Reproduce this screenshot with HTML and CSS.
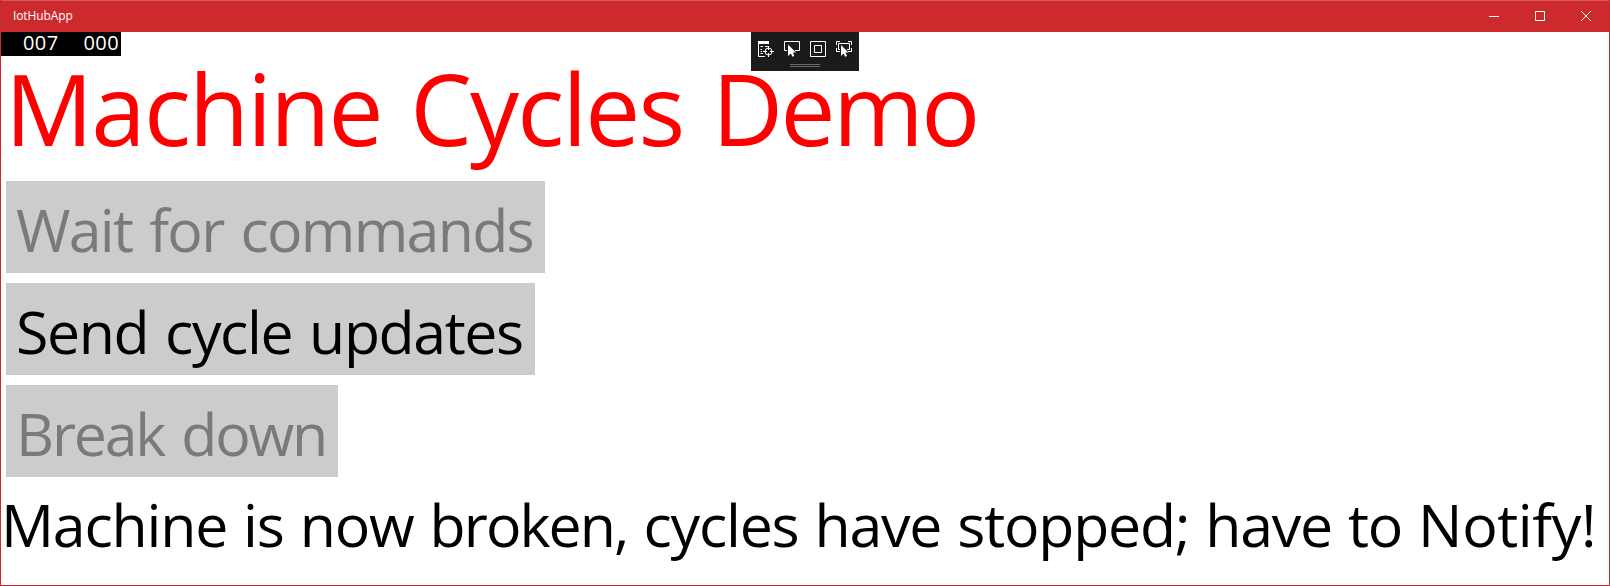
FILE: index.html
```html
<!DOCTYPE html>
<html lang="en">
<head>
<meta charset="utf-8">
<title>IotHubApp</title>
<link rel="stylesheet" href="styles.css">
</head>
<body>
<div class="window">
  <header class="titlebar">
    <span class="app-name">IotHubApp</span>
    <div class="controls">
      <svg width="10" height="10" viewBox="0 0 10 10"><path d="M0 5.5H10"/></svg>
      <svg width="10" height="10" viewBox="0 0 10 10"><path d="M.5 .5H9.5V9.5H.5Z"/></svg>
      <svg width="10" height="10" viewBox="0 0 10 10"><path d="M0 0L10 10M10 0L0 10"/></svg>
    </div>
  </header>
  <main class="content">
    <div class="counters"><span>007</span><span>000</span></div>
    <div class="debug-bar">
      <div class="tools">
        <svg width="17" height="17" viewBox="0 0 17 17"><path class="solid" d="M0 0H11V3H0Z"/><path d="M.5 0V15.5H7M2.5 5.5H5M2.5 8.5H4M2.5 10.5H4M2.5 12.5H5"/><path d="M7 5.5H10"/><circle cx="10.5" cy="10.5" r="3.5"/><path d="M10.5 5V9M10.5 12V16M5 10.5H9M12 10.5H16"/></svg>
        <svg width="17" height="17" viewBox="0 0 17 17"><path d="M3 9.5H.5V.5H15.5V9.5H11"/><path class="solid" d="M4 3.5V15L6.8 12.5L8.5 15.8L10.3 15L8.9 11.6H12Z"/></svg>
        <svg width="17" height="17" viewBox="0 0 17 17"><path d="M.5 .5H15.5V15.5H.5ZM4.5 4.5H11.5V11.5H4.5Z"/></svg>
        <svg width="17" height="17" viewBox="0 0 17 17"><path d="M.5 4V.5H4M12 .5H15.5V4M15.5 7V10.5H12M.5 7V10.5H4M4 8.5H2.5V2.5H13.5V8.5H11"/><path class="solid" d="M5 4V15L7.5 12.5L9.2 15.8L11 15L9.5 11.6H12.5Z"/></svg>
      </div>
      <div class="grip"></div>
    </div>
    <h1 class="heading">Machine Cycles <span class="last">Demo</span></h1>
    <div class="actions">
      <button class="action wait" disabled>Wait for commands</button>
      <button class="action send">Send cycle updates</button>
      <button class="action break" disabled>Break down</button>
    </div>
    <p class="status">Machine is now <span class="broken">broken,</span> cycles have stopped; have to <span class="notify">Notify!</span></p>
  </main>
</div>
</body>
</html>
```
FILE: styles.css
```css
* { box-sizing: border-box; }
body {
  margin: 0;
  background: #fff;
  font-family: "Open Sans", "Noto Sans", sans-serif;
}
.window {
  height: 586px;
  border: 1px solid #cc292d;
  border-top: 0;
  overflow: hidden;
}
.titlebar {
  display: flex;
  justify-content: space-between;
  height: 32px;
  margin: 0 -1px;
  padding: 0 19px 0 13px;
  background: #cc2a2d;
  border-top: 1px solid #d6575a;
  color: #fff;
}
.app-name {
  font-size: 12px;
  line-height: 30px;
  letter-spacing: -0.1px;
}
.controls {
  display: flex;
  gap: 36px;
  padding-top: 10px;
}
svg {
  display: block;
  fill: none;
  stroke: #fff;
}
.solid { fill: #fff; stroke: none; }
.content { position: relative; padding-top: 10px; }
.counters {
  position: absolute;
  top: 0;
  left: 0;
  display: flex;
  gap: 25px;
  width: 120px;
  height: 24px;
  padding-left: 22px;
  background: #000;
  color: #fff;
  font-size: 20px;
  line-height: 22px;
  letter-spacing: 0.4px;
}
.debug-bar {
  position: absolute;
  top: 0;
  left: 750px;
  width: 108px;
  height: 39px;
  padding: 9px 0 0 7px;
  background: #1b1b1b;
}
.tools { display: flex; gap: 9px; }
.grip {
  width: 30px;
  height: 3px;
  margin: 6px 0 0 32px;
  border: solid #6a6a6a;
  border-width: 1px 0;
}
.heading {
  margin: 0;
  padding-left: 4px;
  height: 134px;
  font-size: 98px;
  font-weight: 400;
  line-height: 132px;
  letter-spacing: -1.85px;
  word-spacing: 5px;
  color: #f00;
  white-space: nowrap;
}
.last { letter-spacing: -2.5px; }
.actions {
  display: flex;
  flex-direction: column;
  align-items: flex-start;
  gap: 10px;
  padding: 5px;
}
.action {
  height: 92px;
  border: 0;
  padding: 4px 0 0 10px;
  background: #ccc;
  color: #000;
  font: 59px/88px "Open Sans", "Noto Sans", sans-serif;
  text-align: left;
  white-space: nowrap;
}
.action:disabled { color: #7a7a7a; }
.wait { width: 539px; letter-spacing: -1.7px; word-spacing: 3.2px; }
.send { width: 529px; letter-spacing: -1.4px; word-spacing: 3px; }
.break { width: 332px; letter-spacing: -2.2px; word-spacing: 4px; }
.status {
  margin: 0;
  font-size: 59px;
  line-height: 84px;
  letter-spacing: -1.2px;
  word-spacing: 1.87px;
  white-space: nowrap;
}
.broken { letter-spacing: -1.9px; }
.notify { letter-spacing: -0.4px; }
```
